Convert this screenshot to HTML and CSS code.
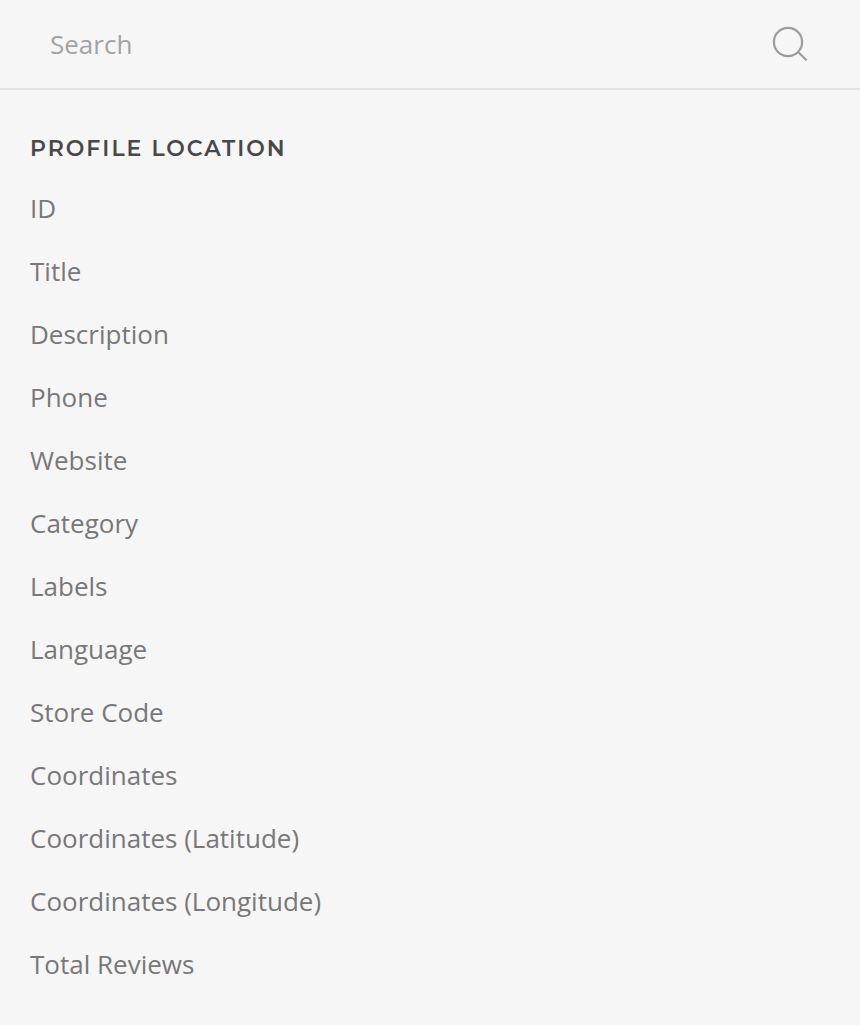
FILE: index.html
```html
<!DOCTYPE html>
<html lang="en">
<head>
<meta charset="utf-8">
<title>Profile location fields</title>
<link rel="stylesheet" href="styles.css">
</head>
<body>
<div class="search">
  <input class="search-input" type="text" placeholder="Search" aria-label="Search">
  <svg class="search-icon" viewBox="0 0 36 36" aria-hidden="true"><circle cx="16" cy="16" r="14.1"/><path d="M26 26L34.6 34.2"/></svg>
</div>
<main class="group">
  <h2 class="group-title">PROFILE LOCATION</h2>
  <ul class="fields">
    <li class="field">ID</li>
    <li class="field">Title</li>
    <li class="field">Description</li>
    <li class="field">Phone</li>
    <li class="field">Website</li>
    <li class="field">Category</li>
    <li class="field">Labels</li>
    <li class="field">Language</li>
    <li class="field">Store Code</li>
    <li class="field">Coordinates</li>
    <li class="field">Coordinates (Latitude)</li>
    <li class="field">Coordinates (Longitude)</li>
    <li class="field">Total Reviews</li>
  </ul>
</main>
</body>
</html>
```
FILE: styles.css
```css
* { box-sizing: border-box; }
body {
  margin: 0;
  min-height: 1025px;
  background: #f6f6f6;
  font-family: "Open Sans", sans-serif;
  font-size: 26px;
  color: #787878;
}
.search {
  display: flex;
  align-items: center;
  justify-content: space-between;
  height: 90px;
  padding: 0 52px 0 50px;
  border-bottom: 2px solid #e4e4e4;
}
.search-input {
  flex: 1;
  min-width: 0;
  height: 60px;
  padding: 0;
  border: 0;
  outline: 0;
  background: transparent;
  font: inherit;
}
.search-input::placeholder { color: #a3a3a3; opacity: 1; }
.search-icon {
  width: 36px;
  height: 36px;
  fill: none;
  stroke: #9c9c9c;
  stroke-width: 2.2;
}
.group { padding: 41px 30px 0; }
.group-title {
  margin: 0;
  font-family: Montserrat, "Open Sans", sans-serif;
  font-size: 22px;
  font-weight: 600;
  line-height: 36px;
  letter-spacing: 2px;
  color: #484848;
}
.fields { margin: 10px 0 0; padding: 0; list-style: none; }
.field { height: 63px; line-height: 63px; }
```
